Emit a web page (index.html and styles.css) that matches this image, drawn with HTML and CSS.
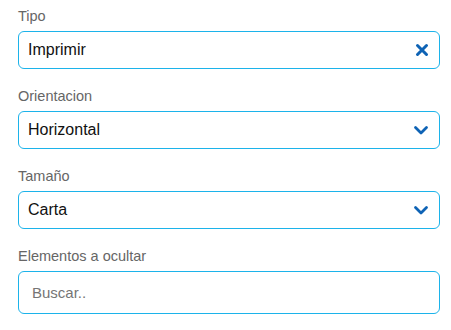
FILE: index.html
```html
<!DOCTYPE html>
<html lang="es">
<head>
<meta charset="utf-8">
<title>Imprimir</title>
<link rel="stylesheet" href="styles.css">
</head>
<body>
<form class="form">
  <div class="field">
    <label class="label">Tipo</label>
    <div class="box">
      <span class="value">Imprimir</span>
      <svg class="icon" width="14" height="14" viewBox="0 0 14 14"><path d="M2.5 2.5 L11.5 11.5 M11.5 2.5 L2.5 11.5" stroke="#0e63b5" stroke-width="3" stroke-linecap="round" fill="none"/></svg>
    </div>
  </div>
  <div class="field">
    <label class="label">Orientacion</label>
    <div class="box">
      <span class="value">Horizontal</span>
      <svg class="icon" width="16" height="14" viewBox="0 0 16 14"><path d="M2.5 4.5 L8 10 L13.5 4.5" stroke="#0e63b5" stroke-width="2.8" stroke-linecap="round" stroke-linejoin="round" fill="none"/></svg>
    </div>
  </div>
  <div class="field">
    <label class="label">Tamaño</label>
    <div class="box">
      <span class="value">Carta</span>
      <svg class="icon" width="16" height="14" viewBox="0 0 16 14"><path d="M2.5 4.5 L8 10 L13.5 4.5" stroke="#0e63b5" stroke-width="2.8" stroke-linecap="round" stroke-linejoin="round" fill="none"/></svg>
    </div>
  </div>
  <div class="field">
    <label class="label">Elementos a ocultar</label>
    <div class="box box-search">
      <span class="placeholder">Buscar..</span>
    </div>
  </div>
</form>
</body>
</html>
```

FILE: styles.css
```css
html, body {
  margin: 0;
  padding: 0;
  background: #ffffff;
}
body {
  font-family: "Liberation Sans", Arial, sans-serif;
  width: 451px;
  height: 330px;
  overflow: hidden;
}
.form {
  display: flex;
  flex-direction: column;
  gap: 19px;
  padding: 8px 11px 0 18px;
}
.field {
  display: flex;
  flex-direction: column;
  gap: 6px;
}
.label {
  font-size: 14.5px;
  line-height: 17px;
  color: #666666;
}
.box {
  box-sizing: border-box;
  height: 38px;
  border: 1px solid #1cb3ea;
  border-radius: 6px;
  display: flex;
  align-items: center;
  justify-content: space-between;
  padding: 0 9px 0 9px;
}
.value {
  font-size: 16px;
  color: #111111;
}
.icon {
  display: block;
  margin-right: 1px;
}
.box-search {
  height: 43px;
  padding-left: 13px;
}
.placeholder {
  font-size: 15px;
  color: #757575;
}
```
